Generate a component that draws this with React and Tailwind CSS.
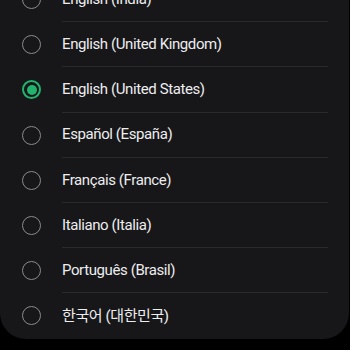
import React from "react";

const languages = [
  "English (India)",
  "English (United Kingdom)",
  "English (United States)",
  "Español (España)",
  "Français (France)",
  "Italiano (Italia)",
  "Português (Brasil)",
  "한국어 (대한민국)",
];

const Radio = ({ checked }) =>
  checked ? (
    <span className="flex h-[19px] w-[19px] items-center justify-center rounded-full border-2 border-[#22b36f]">
      <span className="h-[10px] w-[10px] rounded-full bg-[#22b36f]" />
    </span>
  ) : (
    <span className="h-[19px] w-[19px] rounded-full border-[1.5px] border-[#8b8b8d]" />
  );

export default function App() {
  return (
    <div className="h-[350px] w-[350px] overflow-hidden bg-black" style={{ fontFamily: "Roboto, 'Noto Sans CJK KR', sans-serif" }}>
      <div className="-mt-[23px] mr-[1px] rounded-b-[26px] bg-[#171719] pb-[0px]">
        {languages.map((lang, i) => (
          <div key={lang} className="flex h-[45.2px] items-center">
            <div className="flex w-[62px] shrink-0 justify-center pl-[1px]">
              <Radio checked={lang === "English (United States)"} />
            </div>
            <div
              className={
                "flex h-full flex-1 items-center mr-[21px] text-[15px] tracking-[-0.4px] text-[#ededef] " +
                (i < languages.length - 1 ? "border-b border-[#2a2a2d]" : "")
              }
            >
              {lang}
            </div>
          </div>
        ))}
      </div>
    </div>
  );
}
